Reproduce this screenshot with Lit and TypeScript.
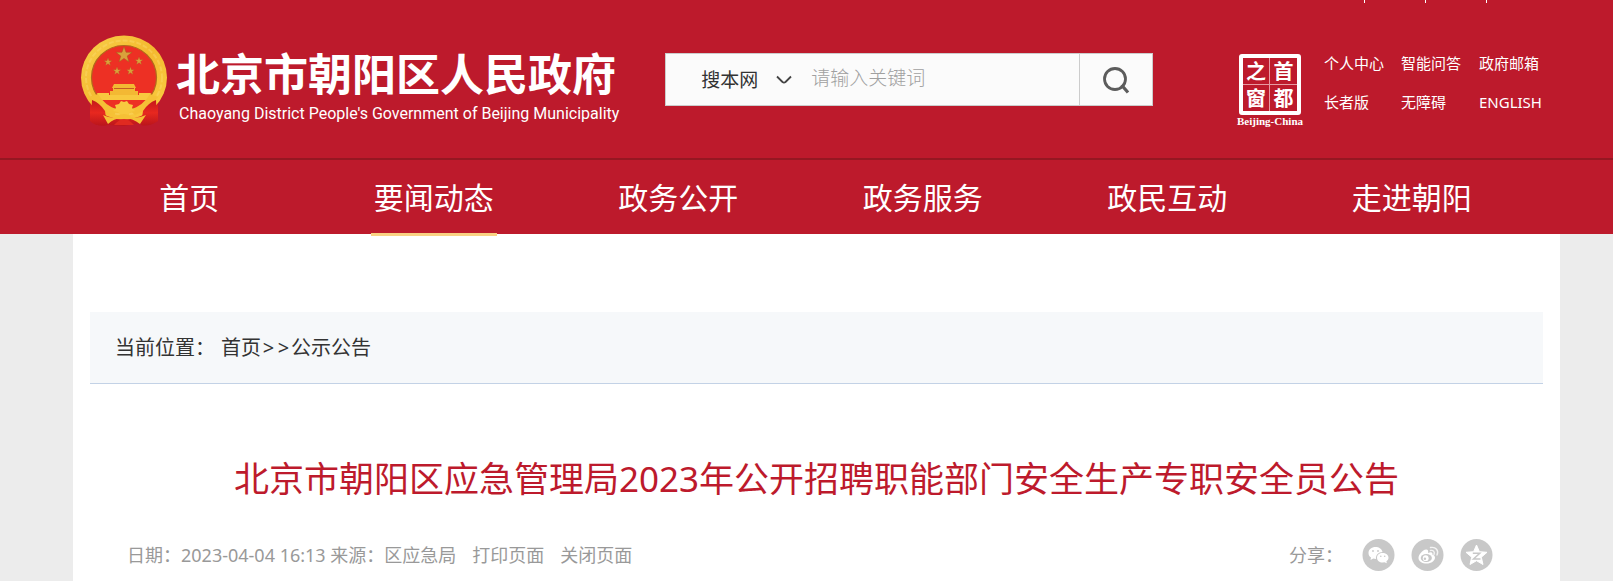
import { LitElement, html, css, svg } from "lit";
import { customElement, state } from "lit/decorators.js";

const STAR = "M0,-10 L2.4,-3.2 L9.5,-3.1 L3.8,1.2 L5.9,8.1 L0,4 L-5.9,8.1 L-3.8,1.2 L-9.5,-3.1 L-2.4,-3.2 Z";

@customElement("national-emblem")
class NationalEmblem extends LitElement {
  static styles = css`
    :host { display: block; }
    svg { display: block; }
  `;
  star(x: number, y: number, s: number) {
    return svg`<path d=${STAR} transform="translate(${x} ${y}) scale(${s})" fill="#d9a13b" stroke="#a8551c" stroke-width="0.6"/>`;
  }
  render() {
    return html`<svg width="88" height="92" viewBox="0 0 88 92" aria-hidden="true">
      <defs>
        <linearGradient id="gold" x1="0" y1="0" x2="1" y2="1">
          <stop offset="0" stop-color="#f8d04a" />
          <stop offset="0.5" stop-color="#f4b92f" />
          <stop offset="1" stop-color="#fbd044" />
        </linearGradient>
        <linearGradient id="cloth" x1="0" y1="0" x2="0" y2="1">
          <stop offset="0" stop-color="#c3171b" />
          <stop offset="0.5" stop-color="#e8281f" />
          <stop offset="1" stop-color="#bb151b" />
        </linearGradient>
      </defs>
      <path d="M10 64 L28 74 L60 74 L78 64 L78 86 Q70 92 60 88 L44 91 L28 90 Q16 92 10 86 Z" fill="url(#cloth)" />
      <ellipse cx="44" cy="42.5" rx="43" ry="42" fill="url(#gold)" />
      <ellipse cx="44" cy="42.5" rx="38" ry="37" fill="none" stroke="#fbe07a" stroke-width="2" stroke-dasharray="5 2" opacity="0.35" />
      <ellipse cx="44" cy="42.5" rx="32.5" ry="32" fill="#ed3024" stroke="#b06a1b" stroke-width="1.2" />
      ${this.star(44, 20, 0.85)} ${this.star(28, 27, 0.42)} ${this.star(59, 26, 0.42)} ${this.star(37, 36, 0.42)} ${this.star(50.5, 36, 0.42)}
      <path d="M34 49 h20 l2 4 h-24 z M33 53 h22 v3 h-22 z M30 56 h28 v5 h-28 z" fill="#f3b833" />
      <path d="M34 53.5 h20" stroke="#b8431e" stroke-width="0.8" />
      <path d="M17 58 h12 v2 h30 v-2 h12 l-3 7 h-48 z" fill="#f8c83f" />
      <path d="M20 65 h48 l-8 8 h-32 z" fill="#ed3024" />
      <path d="M18 59 Q24 70 38 75 L33 80 Q18 74 10 62 Z M70 59 Q64 70 50 75 L55 80 Q70 74 78 62 Z" fill="#f5c036" />
      <path d="M12 65 Q20 68 25 76 L27 90 Q16 92 11 86 Z M76 65 Q68 68 63 76 L61 90 Q70 92 77 86 Z" fill="url(#cloth)" />
      <path d="M35 70 l4 -1 2 -3 3 1 3 -1 2 3 4 1 -1 3 3 3 -5 1 -3 3 -3 -1 -3 1 -3 -3 -5 -1 3 -3 z" fill="#f8c83f" />
      <path d="M23 80 Q34 85 40 80 Q44 78 48 80 Q54 85 66 80 L60 89 Q50 82 44 84 Q36 82 28 89 Z" fill="#f5c036" />
      <path d="M34 90 Q39 84 44 84 Q49 84 54 90 Z" fill="#e02a20" />
    </svg>`;
  }
}

@customElement("site-header")
class SiteHeader extends LitElement {
  static styles = css`
    :host { display: block; background: #bd1a2c; color: #fff; }
    * { box-sizing: border-box; }
    a { color: inherit; text-decoration: none; }
    .ticks { display: flex; justify-content: flex-end; gap: 60px; height: 3px; padding-right: 126px; }
    .ticks i { width: 1px; background: #fff; }
    .top { display: flex; align-items: flex-start; height: 155px; padding: 32px 70px 0 80px; }
    .brand { display: flex; gap: 8px; flex: none; margin-right: 46px; }
    .names { padding-top: 9px; white-space: nowrap; }
    .cn { display: block; font-size: 44px; line-height: 60px; font-weight: 700; }
    .en { display: block; padding-left: 3px; font: 16px/20px Roboto, sans-serif; }
    .search { display: flex; width: 488px; height: 53px; margin-top: 18px; background: #fbfbfb; border: 1px solid #ccc; }
    .scope { display: grid; align-items: center; width: 126px; padding-left: 35px; }
    .scope select, .scope svg { grid-area: 1 / 1; }
    .scope svg { justify-self: end; pointer-events: none; }
    select { appearance: none; border: 0; padding: 0; width: 100%; background: transparent; color: #333; font: inherit; font-size: 19px; line-height: 28px; outline: 0; }
    input { flex: 1; min-width: 0; border: 0; padding: 0 0 4px 19px; background: transparent; font: inherit; font-size: 19px; font-weight: 300; color: #333; outline: 0; }
    input::placeholder { color: #a0a0a0; opacity: 1; }
    .go { display: grid; place-items: center; width: 73px; border: 0; border-left: 1px solid #ccc; background: transparent; padding: 0; }
    .side { display: flex; gap: 20px; margin-left: auto; padding-top: 17px; }
    .window { display: flex; flex-direction: column; align-items: center; width: 68px; margin-top: 2px; }
    .stamp { display: grid; grid-template-columns: 1fr 1fr; width: 62px; height: 61px; border: 4px solid #fff; border-radius: 3px; }
    .stamp span { display: grid; place-items: center; font: 700 20px/24px "Noto Sans CJK SC", sans-serif; }
    .stamp span:nth-child(odd) { border-right: 1px solid #e79aa2; }
    .stamp span:nth-child(-n + 2) { border-bottom: 1px solid #e79aa2; }
    .bj { font: 700 11px/12px "Liberation Serif", serif; white-space: nowrap; }
    .links { display: grid; grid-template-columns: 77px 78px 64px; font-size: 15px; line-height: 21px; row-gap: 18px; align-content: start; padding-top: 1px; white-space: nowrap; }
    nav { border-top: 2px solid #951722; padding: 0 79px 0 67px; }
    ul { display: grid; grid-template-columns: repeat(6, 1fr); margin: 0; padding: 0; list-style: none; height: 74px; }
    li { display: flex; justify-content: center; }
    nav a { height: 76px; padding: 0 3px; font-size: 30px; line-height: 76px; white-space: nowrap; }
    nav a.on { border-bottom: 3px solid #f9d283; z-index: 1; }
  `;
  @state() active = 1;
  nav = ["首页", "要闻动态", "政务公开", "政务服务", "政民互动", "走进朝阳"];
  links = ["个人中心", "智能问答", "政府邮箱", "长者版", "无障碍", "ENGLISH"];
  render() {
    return html`
      <div class="ticks"><i></i><i></i><i></i></div>
      <div class="top">
        <a class="brand" href="#">
          <national-emblem></national-emblem>
          <span class="names">
            <span class="cn">北京市朝阳区人民政府</span>
            <span class="en">Chaoyang District People's Government of Beijing Municipality</span>
          </span>
        </a>
        <form class="search" @submit=${(e: Event) => e.preventDefault()}>
          <div class="scope">
            <select aria-label="搜索范围"><option>搜本网</option></select>
            <svg width="16" height="10" viewBox="0 0 16 10" fill="none" stroke="#444" stroke-width="1.8"><path d="M1 1.5 L6.5 7 Q8 8.2 9.5 7 L15 1.5" /></svg>
          </div>
          <input type="text" placeholder="请输入关键词" aria-label="关键词" />
          <button class="go" aria-label="搜索">
            <svg width="28" height="28" viewBox="0 0 28 28" fill="none" stroke="#5c5c5c" stroke-width="2.8"><circle cx="13" cy="13" r="10.5" /><path d="M19.5 19 L26 26.5" stroke-width="3.2" /></svg>
          </button>
        </form>
        <div class="side">
          <a class="window" href="#">
            <span class="stamp"><span>之</span><span>首</span><span>窗</span><span>都</span></span>
            <span class="bj">Beijing-China</span>
          </a>
          <div class="links">${this.links.map((l) => html`<a href="#">${l}</a>`)}</div>
        </div>
      </div>
      <nav><ul>
        ${this.nav.map((n, i) => html`<li><a href="#" class=${i === this.active ? "on" : ""} @click=${() => (this.active = i)}>${n}</a></li>`)}
      </ul></nav>
    `;
  }
}

@customElement("app-root")
class AppRoot extends LitElement {
  static styles = css`
    :host { display: block; min-height: 100vh; overflow: hidden; background: #ececec; font-family: "Noto Sans", "Noto Sans CJK SC", sans-serif; }
    * { box-sizing: border-box; }
    a { color: inherit; text-decoration: none; }
    main { margin: 0 53px 0 73px; padding: 78px 17px 0; background: #fff; min-height: calc(100vh - 234px); }
    .crumbs { display: flex; height: 72px; padding: 0 25px; background: #f6f8fa; border-bottom: 1px solid #c3d2e6; color: #333; font-size: 20px; line-height: 72px; }
    .crumbs span { margin-right: 6px; }
    .crumbs i { width: 15px; text-align: center; font-style: normal; }
    h1 { margin: 70px 0 0; text-align: center; color: #bd1a2c; font-size: 35px; line-height: 50px; font-weight: 400; }
    .meta { display: flex; justify-content: space-between; align-items: center; margin-top: 35px; padding: 0 50px 8px 37px; color: #999; font-size: 18px; line-height: 32px; white-space: nowrap; }
    .info a { margin-left: 16px; }
    .share { display: flex; gap: 16px; }
    .share span { margin-right: 3px; }
    .share a, .share svg { display: block; }
  `;
  render() {
    return html`
      <site-header></site-header>
      <main>
        <div class="crumbs"><span>当前位置：</span><a href="#">首页</a><i>&gt;</i><i>&gt;</i><a href="#">公示公告</a></div>
        <h1>北京市朝阳区应急管理局2023年公开招聘职能部门安全生产专职安全员公告</h1>
        <div class="meta">
          <div class="info">日期：2023-04-04 16:13 来源：区应急局<a href="#">打印页面</a><a href="#">关闭页面</a></div>
          <div class="share">
            <span>分享：</span>
            <a href="#" aria-label="微信"><svg width="33" height="32" viewBox="0 0 32 32"><circle cx="16" cy="16" r="16" fill="#c8c8c8" />
              <path d="M13 8 C9 8 6 10.500 6 14 C6 16 7 17.500 8.500 18.600 L8 21 L10.800 19.600 L13.500 20 C13 16 16 13 20 13 C19.500 10 16.500 8 13 8 Z" fill="#fff" />
              <path d="M20 14 C16.800 14 14.500 16 14.500 18.700 C14.500 21.500 17 23.500 20 23.500 L22 23.200 L24.300 24.300 L23.900 22.300 C25.200 21.400 26 20.100 26 18.700 C26 16 23.300 14 20 14 Z" fill="#fff" />
              <g fill="#c8c8c8"><circle cx="10.500" cy="12" r="0.9" /><circle cx="15.500" cy="12" r="0.9" /><circle cx="18.300" cy="17.300" r="0.8" /><circle cx="22.200" cy="17.300" r="0.8" /></g></svg></a>
            <a href="#" aria-label="微博"><svg width="33" height="32" viewBox="0 0 32 32"><circle cx="16" cy="16" r="16" fill="#c8c8c8" />
              <path d="M14.500 10.500 C11 11 7 15.500 7 19 C7 22.500 10.800 24.500 15 24.500 C20 24.500 23.500 21.500 23.500 18.700 C23.500 17 22.200 16 20.800 15.600 C21.500 13.500 20 12.500 16.500 14 C17 12 16.500 10.300 14.500 10.500 Z" fill="#fff" />
              <ellipse cx="14.800" cy="19" rx="5.600" ry="4" fill="#c8c8c8" /><circle cx="14.200" cy="19.200" r="2.900" fill="#fff" /><circle cx="13.400" cy="19.700" r="1.200" fill="#c8c8c8" />
              <path d="M19 11.500 C22 11 23.500 13 22.500 15.500 M19 8.500 C24.500 7.500 27.500 11.500 25.500 16" fill="none" stroke="#fff" stroke-opacity="0.8" stroke-width="1.400" stroke-linecap="round" /></svg></a>
            <a href="#" aria-label="QQ空间"><svg width="33" height="32" viewBox="0 0 32 32"><circle cx="16" cy="16" r="16" fill="#c8c8c8" />
              <path d="M16 6 L18.900 12.700 L26.500 13.300 L20.800 18.200 L22.500 25.500 L16 21.700 L9.500 25.500 L11.200 18.200 L5.500 13.300 L13.100 12.700 Z" fill="#fff" stroke="#fff" stroke-linejoin="round" />
              <path d="M12.300 14.300 H19.300 L13 20 H20" fill="none" stroke="#c8c8c8" stroke-width="1.500" /></svg></a>
          </div>
        </div>
      </main>
    `;
  }
}
